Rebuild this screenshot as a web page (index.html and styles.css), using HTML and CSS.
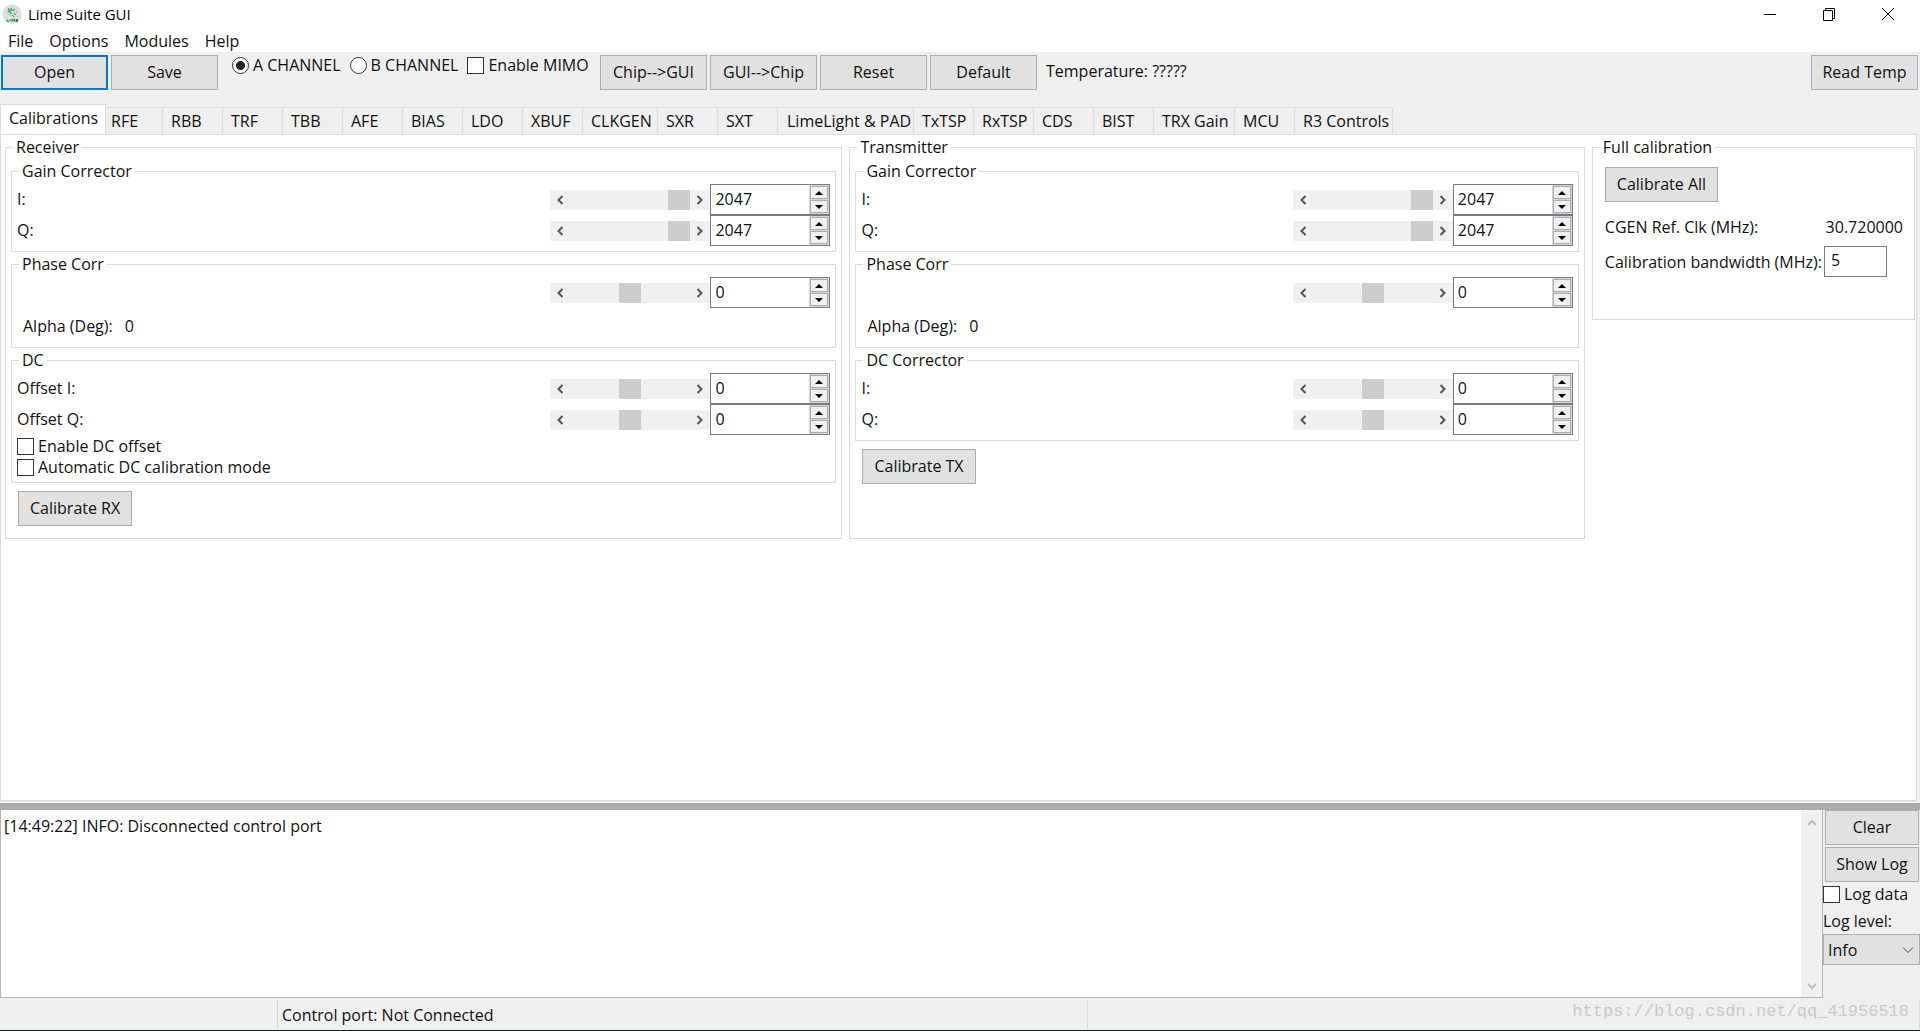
FILE: index.html
```html
<!DOCTYPE html>
<html lang="en">
<head>
<meta charset="utf-8">
<title>Lime Suite GUI</title>
<link rel="stylesheet" href="styles.css">
</head>
<body>
<header class="titlebar">
  <svg class="logo" viewBox="0 0 20 20" aria-hidden="true">
    <ellipse cx="10" cy="10" rx="9.6" ry="9.8" fill="#dedede"/>
    <path d="M6 4.5l2.5 2M9 4l.6 2.6M5.5 8l3-.6M9 8.5L8 11M10.5 7l2.5-2M12 9.500l2 1M14.500 7.500l.5.5M10.500 11l1.500 2M6.500 6.500l3 3" stroke="#2fa84f" stroke-width="1.200" fill="none"/>
    <path d="M5 15.500v1.800h2M8 15.500v1.800M10 17.500v-2l1.200 1.200 1.200-1.200v2M16 15.500h-1.800v1.900H16M14.200 16.500H16" stroke="#1f9a41" stroke-width="1.100" fill="none"/>
  </svg>
  <h1 class="title">Lime Suite GUI</h1>
  <div class="window-controls">
    <button class="window-button" type="button" aria-label="Minimize"><svg viewBox="0 0 16 16"><path d="M2 8.500h12" /></svg></button>
    <button class="window-button" type="button" aria-label="Restore"><svg viewBox="0 0 16 16"><path d="M2.500 4.500h9v10h-9zM4.500 4.500v-2h9v10h-2"/></svg></button>
    <button class="window-button" type="button" aria-label="Close"><svg viewBox="0 0 16 16"><path d="M2 2l12 12M14 2L2 14"/></svg></button>
  </div>
</header>
<nav class="menubar">
  <a href="#file">File</a>
  <a href="#options">Options</a>
  <a href="#modules">Modules</a>
  <a href="#help">Help</a>
</nav>

<div class="toolbar">
  <button class="button tool default" type="button">Open</button>
  <button class="button tool" type="button">Save</button>
  <div class="channels">
    <label class="check"><input type="radio" name="channel" checked>A CHANNEL</label>
    <label class="check"><input type="radio" name="channel">B CHANNEL</label>
    <label class="check"><input type="checkbox">Enable MIMO</label>
  </div>
  <button class="button tool" type="button">Chip--&gt;GUI</button>
  <button class="button tool" type="button">GUI--&gt;Chip</button>
  <button class="button tool" type="button">Reset</button>
  <button class="button tool" type="button">Default</button>
  <span class="temperature">Temperature: ?????</span>
  <button class="button tool read" type="button">Read Temp</button>
</div>

<main class="notebook">
  <div class="tabs" role="tablist">
    <button class="tab active" type="button" role="tab" aria-selected="true">Calibrations</button>
    <button class="tab first" type="button" role="tab">RFE</button>
    <button class="tab" type="button" role="tab">RBB</button>
    <button class="tab" type="button" role="tab">TRF</button>
    <button class="tab" type="button" role="tab">TBB</button>
    <button class="tab" type="button" role="tab">AFE</button>
    <button class="tab" type="button" role="tab">BIAS</button>
    <button class="tab" type="button" role="tab">LDO</button>
    <button class="tab" type="button" role="tab">XBUF</button>
    <button class="tab medium" type="button" role="tab">CLKGEN</button>
    <button class="tab" type="button" role="tab">SXR</button>
    <button class="tab" type="button" role="tab">SXT</button>
    <button class="tab wide" type="button" role="tab">LimeLight &amp; PAD</button>
    <button class="tab" type="button" role="tab">TxTSP</button>
    <button class="tab" type="button" role="tab">RxTSP</button>
    <button class="tab" type="button" role="tab">CDS</button>
    <button class="tab" type="button" role="tab">BIST</button>
    <button class="tab gain" type="button" role="tab">TRX Gain</button>
    <button class="tab" type="button" role="tab">MCU</button>
    <button class="tab controls" type="button" role="tab">R3 Controls</button>
  </div>

  <div class="page" role="tabpanel">
    <fieldset class="group outer">
      <legend>Receiver</legend>
      <fieldset class="group inner">
        <legend>Gain Corrector</legend>
        <div class="row"><label for="rx-gain-i">I:</label>
          <div class="scroll"><button type="button" aria-label="Decrease"><svg viewBox="0 0 8 10"><path d="M6.500 1L2.500 5l4 4"/></svg></button><input type="range" min="0" max="2047" value="2047" aria-label="Receiver gain I"><button type="button" aria-label="Increase"><svg viewBox="0 0 8 10"><path d="M1.500 1l4 4-4 4"/></svg></button></div>
          <div class="spin"><input id="rx-gain-i" type="text" value="2047"><div class="steps"><button type="button" aria-label="Up"><i class="up"></i></button><button type="button" aria-label="Down"><i class="down"></i></button></div></div></div>
        <div class="row"><label for="rx-gain-q">Q:</label>
          <div class="scroll"><button type="button" aria-label="Decrease"><svg viewBox="0 0 8 10"><path d="M6.500 1L2.500 5l4 4"/></svg></button><input type="range" min="0" max="2047" value="2047" aria-label="Receiver gain Q"><button type="button" aria-label="Increase"><svg viewBox="0 0 8 10"><path d="M1.500 1l4 4-4 4"/></svg></button></div>
          <div class="spin"><input id="rx-gain-q" type="text" value="2047"><div class="steps"><button type="button" aria-label="Up"><i class="up"></i></button><button type="button" aria-label="Down"><i class="down"></i></button></div></div></div>
      </fieldset>
      <fieldset class="group inner phase">
        <legend>Phase Corr</legend>
        <div class="row"><span></span>
          <div class="scroll"><button type="button" aria-label="Decrease"><svg viewBox="0 0 8 10"><path d="M6.500 1L2.500 5l4 4"/></svg></button><input type="range" min="-2047" max="2047" value="0" aria-label="Receiver phase"><button type="button" aria-label="Increase"><svg viewBox="0 0 8 10"><path d="M1.500 1l4 4-4 4"/></svg></button></div>
          <div class="spin"><input type="text" value="0" aria-label="Receiver phase value"><div class="steps"><button type="button" aria-label="Up"><i class="up"></i></button><button type="button" aria-label="Down"><i class="down"></i></button></div></div></div>
        <p class="alpha"><span>Alpha (Deg):</span><span>0</span></p>
      </fieldset>
      <fieldset class="group inner">
        <legend>DC</legend>
        <div class="row"><label for="rx-dc-i">Offset I:</label>
          <div class="scroll"><button type="button" aria-label="Decrease"><svg viewBox="0 0 8 10"><path d="M6.500 1L2.500 5l4 4"/></svg></button><input type="range" min="-63" max="63" value="0" aria-label="Receiver offset I"><button type="button" aria-label="Increase"><svg viewBox="0 0 8 10"><path d="M1.500 1l4 4-4 4"/></svg></button></div>
          <div class="spin"><input id="rx-dc-i" type="text" value="0"><div class="steps"><button type="button" aria-label="Up"><i class="up"></i></button><button type="button" aria-label="Down"><i class="down"></i></button></div></div></div>
        <div class="row"><label for="rx-dc-q">Offset Q:</label>
          <div class="scroll"><button type="button" aria-label="Decrease"><svg viewBox="0 0 8 10"><path d="M6.500 1L2.500 5l4 4"/></svg></button><input type="range" min="-63" max="63" value="0" aria-label="Receiver offset Q"><button type="button" aria-label="Increase"><svg viewBox="0 0 8 10"><path d="M1.500 1l4 4-4 4"/></svg></button></div>
          <div class="spin"><input id="rx-dc-q" type="text" value="0"><div class="steps"><button type="button" aria-label="Up"><i class="up"></i></button><button type="button" aria-label="Down"><i class="down"></i></button></div></div></div>
        <div class="options">
          <label class="check"><input type="checkbox">Enable DC offset</label>
          <label class="check"><input type="checkbox">Automatic DC calibration mode</label>
        </div>
      </fieldset>
      <button class="button calibrate" type="button">Calibrate RX</button>
    </fieldset>

    <fieldset class="group outer">
      <legend>Transmitter</legend>
      <fieldset class="group inner">
        <legend>Gain Corrector</legend>
        <div class="row"><label for="tx-gain-i">I:</label>
          <div class="scroll"><button type="button" aria-label="Decrease"><svg viewBox="0 0 8 10"><path d="M6.500 1L2.500 5l4 4"/></svg></button><input type="range" min="0" max="2047" value="2047" aria-label="Transmitter gain I"><button type="button" aria-label="Increase"><svg viewBox="0 0 8 10"><path d="M1.500 1l4 4-4 4"/></svg></button></div>
          <div class="spin"><input id="tx-gain-i" type="text" value="2047"><div class="steps"><button type="button" aria-label="Up"><i class="up"></i></button><button type="button" aria-label="Down"><i class="down"></i></button></div></div></div>
        <div class="row"><label for="tx-gain-q">Q:</label>
          <div class="scroll"><button type="button" aria-label="Decrease"><svg viewBox="0 0 8 10"><path d="M6.500 1L2.500 5l4 4"/></svg></button><input type="range" min="0" max="2047" value="2047" aria-label="Transmitter gain Q"><button type="button" aria-label="Increase"><svg viewBox="0 0 8 10"><path d="M1.500 1l4 4-4 4"/></svg></button></div>
          <div class="spin"><input id="tx-gain-q" type="text" value="2047"><div class="steps"><button type="button" aria-label="Up"><i class="up"></i></button><button type="button" aria-label="Down"><i class="down"></i></button></div></div></div>
      </fieldset>
      <fieldset class="group inner phase">
        <legend>Phase Corr</legend>
        <div class="row"><span></span>
          <div class="scroll"><button type="button" aria-label="Decrease"><svg viewBox="0 0 8 10"><path d="M6.500 1L2.500 5l4 4"/></svg></button><input type="range" min="-2047" max="2047" value="0" aria-label="Transmitter phase"><button type="button" aria-label="Increase"><svg viewBox="0 0 8 10"><path d="M1.500 1l4 4-4 4"/></svg></button></div>
          <div class="spin"><input type="text" value="0" aria-label="Transmitter phase value"><div class="steps"><button type="button" aria-label="Up"><i class="up"></i></button><button type="button" aria-label="Down"><i class="down"></i></button></div></div></div>
        <p class="alpha"><span>Alpha (Deg):</span><span>0</span></p>
      </fieldset>
      <fieldset class="group inner">
        <legend>DC Corrector</legend>
        <div class="row"><label for="tx-dc-i">I:</label>
          <div class="scroll"><button type="button" aria-label="Decrease"><svg viewBox="0 0 8 10"><path d="M6.500 1L2.500 5l4 4"/></svg></button><input type="range" min="-127" max="127" value="0" aria-label="Transmitter DC I"><button type="button" aria-label="Increase"><svg viewBox="0 0 8 10"><path d="M1.500 1l4 4-4 4"/></svg></button></div>
          <div class="spin"><input id="tx-dc-i" type="text" value="0"><div class="steps"><button type="button" aria-label="Up"><i class="up"></i></button><button type="button" aria-label="Down"><i class="down"></i></button></div></div></div>
        <div class="row"><label for="tx-dc-q">Q:</label>
          <div class="scroll"><button type="button" aria-label="Decrease"><svg viewBox="0 0 8 10"><path d="M6.500 1L2.500 5l4 4"/></svg></button><input type="range" min="-127" max="127" value="0" aria-label="Transmitter DC Q"><button type="button" aria-label="Increase"><svg viewBox="0 0 8 10"><path d="M1.500 1l4 4-4 4"/></svg></button></div>
          <div class="spin"><input id="tx-dc-q" type="text" value="0"><div class="steps"><button type="button" aria-label="Up"><i class="up"></i></button><button type="button" aria-label="Down"><i class="down"></i></button></div></div></div>
      </fieldset>
      <button class="button calibrate" type="button">Calibrate TX</button>
    </fieldset>

    <fieldset class="group full">
      <legend>Full calibration</legend>
      <button class="button calibrate" type="button">Calibrate All</button>
      <p class="clock"><span>CGEN Ref. Clk (MHz):</span><span>30.720000</span></p>
      <div class="bandwidth"><label for="bandwidth">Calibration bandwidth (MHz):</label><input id="bandwidth" type="text" value="5"></div>
    </fieldset>
  </div>
</main>

<section class="log">
  <textarea class="log-text" readonly aria-label="Log">[14:49:22] INFO: Disconnected control port</textarea>
  <div class="log-scroll">
    <button type="button" aria-label="Scroll up"><svg viewBox="0 0 12 10"><path d="M2 7l4-4 4 4"/></svg></button>
    <button type="button" aria-label="Scroll down"><svg viewBox="0 0 12 10"><path d="M2 3l4 4 4-4"/></svg></button>
  </div>
  <div class="log-tools">
    <button class="button" type="button">Clear</button>
    <button class="button" type="button">Show Log</button>
    <label class="check"><input type="checkbox">Log data</label>
    <label class="level" for="level">Log level:</label>
    <div class="select"><select id="level"><option>Info</option></select><svg viewBox="0 0 12 8"><path d="M1 1.500l5 5 5-5"/></svg></div>
  </div>
</section>

<footer class="statusbar">
  <span class="status-cell"></span>
  <span class="status-cell port">Control port: Not Connected</span>
  <span class="status-cell mark">https://blog.csdn.net/qq_41956518</span>
</footer>
</body>
</html>
```
FILE: styles.css
```css
* {
  box-sizing: border-box;
}

body {
  margin: 0;
  min-height: 100vh;
  display: flex;
  flex-direction: column;
  background: #efefef;
  color: #111;
  font: 16px/20px "Open Sans", sans-serif;
  border-bottom: 1px solid #13211f;
}

button,
input,
select,
textarea {
  margin: 0;
  padding: 0;
  border: 0;
  border-radius: 0;
  background: none;
  color: inherit;
  font: inherit;
}

p {
  margin: 0;
}

/* Title bar and menu */
.titlebar {
  display: flex;
  align-items: center;
  height: 28px;
  padding: 0 3px 0 2px;
  background: #fff;
}

.logo {
  width: 20px;
  height: 20px;
}

.title {
  flex: 1;
  margin: 0;
  padding-left: 6px;
  font-size: 15px;
  font-weight: 400;
  color: #000;
}

.window-controls {
  display: flex;
}

.window-button {
  display: flex;
  align-items: center;
  justify-content: center;
  width: 59px;
  height: 28px;
}

.window-button svg {
  width: 16px;
  height: 16px;
  fill: none;
  stroke: #000;
}

.menubar {
  display: flex;
  gap: 16px;
  height: 24px;
  padding: 3px 8px 0;
  background: #fff;
}

.menubar a {
  color: inherit;
  text-decoration: none;
}

/* Toolbar */
.toolbar {
  display: flex;
  gap: 3px;
  height: 52px;
  padding: 3px 2px 0 1px;
}

.button {
  height: 35px;
  padding-bottom: 1px;
  background: #e1e1e1;
  border: 1px solid #adadad;
  text-align: center;
}

.tool {
  flex: none;
  width: 107px;
}

.tool.default {
  border: 2px solid #0078d7;
}

.channels {
  display: flex;
  gap: 9px;
  width: 376px;
  padding-left: 11px;
}

.check {
  display: flex;
  align-items: center;
  gap: 4px;
  height: 20px;
  white-space: nowrap;
}

.check input {
  appearance: none;
  flex: none;
  width: 17px;
  height: 17px;
  background: #fff;
  border: 1px solid #333;
}

.check input[type="radio"] {
  border-radius: 50%;
}

.check input[type="radio"]:checked {
  background: radial-gradient(circle, #222 4px, #fff 5px);
}

.temperature {
  flex: 1;
  padding: 6px;
}

/* Notebook */
.notebook {
  flex: 1;
  display: flex;
  flex-direction: column;
  padding: 0 3px 2px 0;
}

.tabs {
  display: flex;
  align-items: flex-end;
  height: 30px;
}

.tab {
  flex: none;
  width: 60px;
  height: 27px;
  padding-left: 8px;
  border: 1px solid #dcdcdc;
  border-width: 1px 1px 0 0;
  text-align: left;
  white-space: nowrap;
}

.tab.active {
  width: 106px;
  height: 30px;
  padding: 0 0 4px 8px;
  background: #fff;
  border-left-width: 1px;
}

.tab.first {
  width: 57px;
  padding-left: 5px;
}

.tab.medium {
  width: 75px;
}

.tab.wide {
  width: 136px;
  padding-left: 9px;
}

.tab.gain {
  width: 81px;
}

.tab.controls {
  width: 98px;
}

.page {
  flex: 1;
  display: grid;
  grid-template-columns: 837fr 735fr 323fr;
  align-items: start;
  gap: 7px;
  padding: 2px 1px 3px 4px;
  background: #fff;
  border: 1px solid #dcdcdc;
}

.group {
  min-width: 0;
  margin: 0;
  padding: 0;
  border: 1px solid #dcdcdc;
}

.group legend {
  height: 20px;
  margin-left: 2px;
  padding: 0 3px;
}

.outer {
  height: 402px;
  padding: 4px 5px 0;
}

.inner {
  margin-bottom: 2px;
  padding: 3px 5px 5px;
}

.phase {
  height: 94px;
}

.row {
  display: flex;
  align-items: center;
  height: 31px;
}

.row > :first-child {
  flex: 1;
}

.row label {
  padding-bottom: 2px;
}

.options {
  display: grid;
  gap: 1px;
  padding-top: 1px;
}

.scroll {
  display: flex;
  width: 160px;
  height: 20px;
  background: #f0f0f0;
}

.scroll button {
  display: flex;
  align-items: center;
  justify-content: center;
  width: 20px;
}

.scroll svg {
  width: 8px;
  height: 10px;
  fill: none;
  stroke: #555;
  stroke-width: 2;
}

.scroll input {
  appearance: none;
  width: 120px;
  height: 20px;
}

.scroll input::-webkit-slider-thumb {
  appearance: none;
  width: 22px;
  height: 20px;
  background: #cdcdcd;
}

.spin {
  display: flex;
  width: 120px;
  height: 31px;
  background: #fff;
  border: 1px solid #7a7a7a;
}

.spin input {
  flex: 1;
  min-width: 0;
  padding: 0 0 2px 4px;
}

.steps {
  display: flex;
  flex-direction: column;
  gap: 1px;
  width: 20px;
  padding: 1px;
  background: #d4d5db;
}

.steps button {
  flex: 1;
  display: flex;
  align-items: center;
  justify-content: center;
  background: #f0f0f0;
  border: 1px solid #adadad;
}

.steps i {
  border: 4px solid transparent;
}

.steps .up {
  border-top: 0;
  border-bottom-color: #000;
}

.steps .down {
  border-bottom: 0;
  border-top-color: #000;
}

.alpha {
  display: flex;
  gap: 12px;
  padding: 8px 6px 0;
}

.calibrate {
  margin: 6px 0 0 7px;
  padding: 0 11px 1px;
}

.full {
  height: 183px;
  padding: 4px 11px 0 12px;
}

.group.full legend {
  margin-left: -5px;
}

.full .calibrate {
  margin-left: 0;
}

.clock {
  display: flex;
  justify-content: space-between;
  padding: 15px 0 9px;
}

.bandwidth {
  display: flex;
  align-items: center;
  gap: 2px;
  white-space: nowrap;
}

.bandwidth input {
  width: 63px;
  height: 31px;
  padding: 0 6px 4px;
  background: #fff;
  border: 1px solid #7a7a7a;
}

/* Log */
.log {
  display: flex;
  height: 195px;
  border-top: 7px solid #ababab;
}

.log-text {
  flex: 1;
  padding: 6px 3px;
  background: #fff;
  border: 1px solid #b4b4ba;
  border-width: 0 0 1px 1px;
  outline: 0;
  resize: none;
}

.log-scroll {
  display: flex;
  flex-direction: column;
  justify-content: space-between;
  width: 22px;
  background: #f0f0f0;
  border: 1px solid #b4b4ba;
  border-width: 0 1px 1px 0;
}

.log-scroll button {
  height: 24px;
}

.log-scroll svg {
  width: 12px;
  height: 10px;
  fill: none;
  stroke: #bdbdbd;
  stroke-width: 2;
}

.log-tools {
  display: flex;
  flex-direction: column;
  width: 97px;
}

.log-tools .button {
  margin: 0 1px 2px 2px;
}

.level {
  padding: 7px 0 3px;
}

.select {
  display: flex;
  align-items: center;
  height: 31px;
  padding-right: 5px;
  background: #e1e1e1;
  border: 1px solid #adadad;
}

.select select {
  appearance: none;
  flex: 1;
  padding-left: 4px;
}

.select svg {
  width: 12px;
  height: 8px;
  fill: none;
  stroke: #444;
}

/* Status bar */
.statusbar {
  display: grid;
  grid-template-columns: 278fr 810fr 832fr;
  height: 32px;
  padding: 2px 0;
}

.status-cell {
  padding: 5px 4px 0;
  border-right: 1px solid #d7d7d7;
}

.mark {
  padding: 1px 10px 0;
  color: #cacac6;
  font: 17px/22px "Liberation Mono", monospace;
  text-align: right;
}
```
